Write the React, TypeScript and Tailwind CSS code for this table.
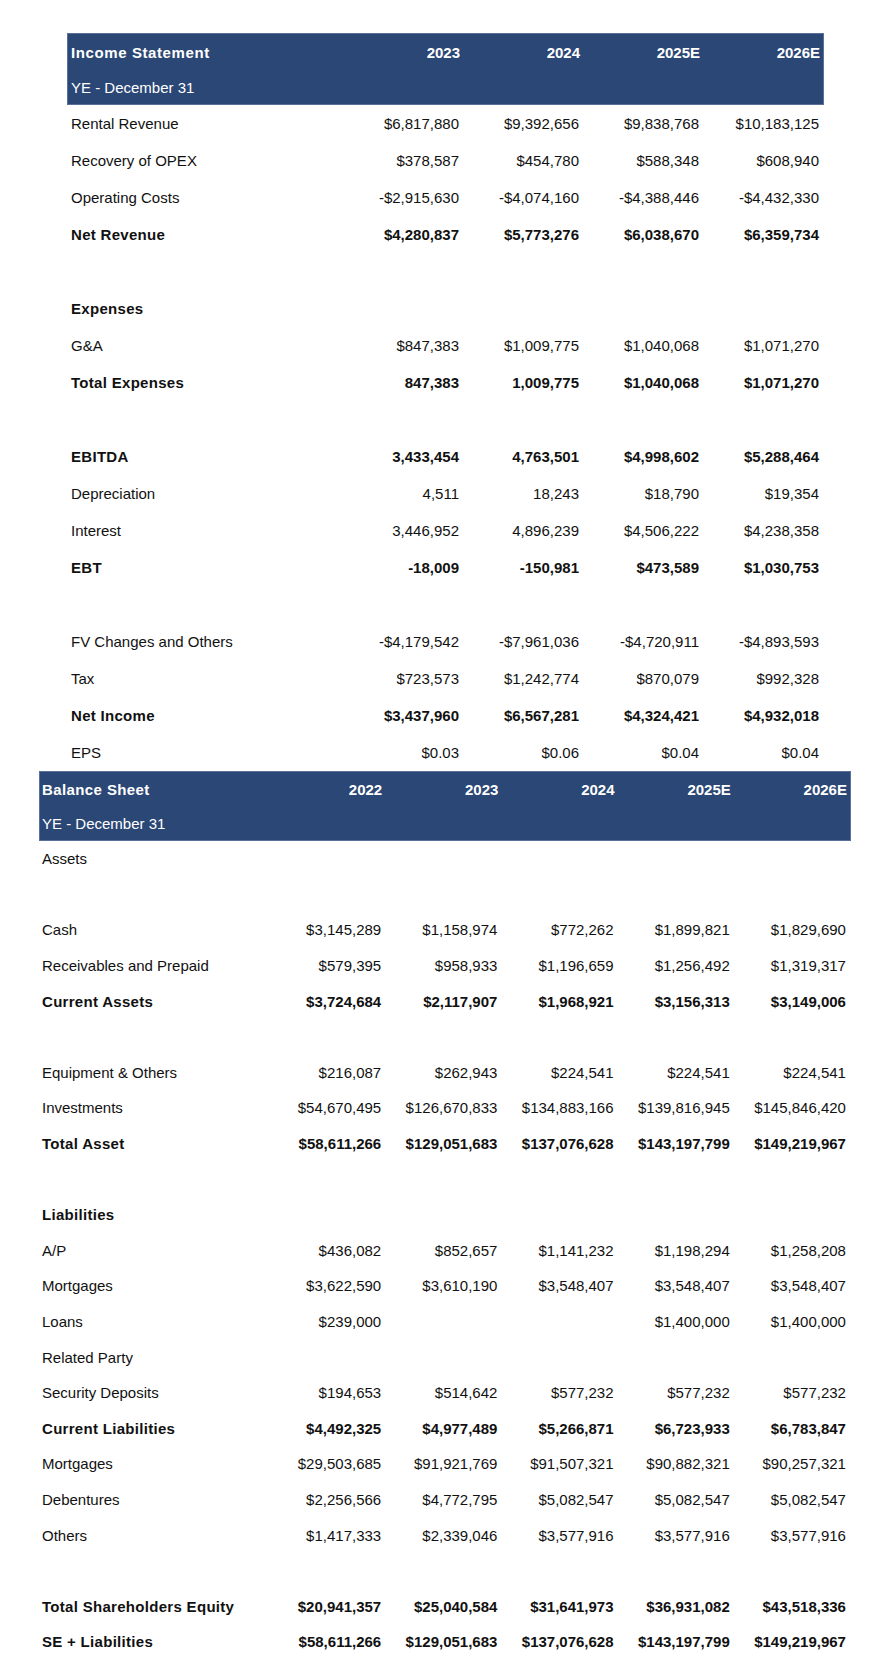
type Row = {
  label?: string;
  values?: string[];
  bold?: boolean;
};

const incomeYears = ["2023", "2024", "2025E", "2026E"];

const incomeRows: Row[] = [
  { label: "Rental Revenue", values: ["$6,817,880", "$9,392,656", "$9,838,768", "$10,183,125"] },
  { label: "Recovery of OPEX", values: ["$378,587", "$454,780", "$588,348", "$608,940"] },
  { label: "Operating Costs", values: ["-$2,915,630", "-$4,074,160", "-$4,388,446", "-$4,432,330"] },
  { label: "Net Revenue", values: ["$4,280,837", "$5,773,276", "$6,038,670", "$6,359,734"], bold: true },
  {},
  { label: "Expenses", bold: true },
  { label: "G&A", values: ["$847,383", "$1,009,775", "$1,040,068", "$1,071,270"] },
  { label: "Total Expenses", values: ["847,383", "1,009,775", "$1,040,068", "$1,071,270"], bold: true },
  {},
  { label: "EBITDA", values: ["3,433,454", "4,763,501", "$4,998,602", "$5,288,464"], bold: true },
  { label: "Depreciation", values: ["4,511", "18,243", "$18,790", "$19,354"] },
  { label: "Interest", values: ["3,446,952", "4,896,239", "$4,506,222", "$4,238,358"] },
  { label: "EBT", values: ["-18,009", "-150,981", "$473,589", "$1,030,753"], bold: true },
  {},
  { label: "FV Changes and Others", values: ["-$4,179,542", "-$7,961,036", "-$4,720,911", "-$4,893,593"] },
  { label: "Tax", values: ["$723,573", "$1,242,774", "$870,079", "$992,328"] },
  { label: "Net Income", values: ["$3,437,960", "$6,567,281", "$4,324,421", "$4,932,018"], bold: true },
  { label: "EPS", values: ["$0.03", "$0.06", "$0.04", "$0.04"] }
];

const balanceYears = ["2022", "2023", "2024", "2025E", "2026E"];

const balanceRows: Row[] = [
  { label: "Assets" },
  {},
  { label: "Cash", values: ["$3,145,289", "$1,158,974", "$772,262", "$1,899,821", "$1,829,690"] },
  { label: "Receivables and Prepaid", values: ["$579,395", "$958,933", "$1,196,659", "$1,256,492", "$1,319,317"] },
  { label: "Current Assets", values: ["$3,724,684", "$2,117,907", "$1,968,921", "$3,156,313", "$3,149,006"], bold: true },
  {},
  { label: "Equipment & Others", values: ["$216,087", "$262,943", "$224,541", "$224,541", "$224,541"] },
  { label: "Investments", values: ["$54,670,495", "$126,670,833", "$134,883,166", "$139,816,945", "$145,846,420"] },
  { label: "Total Asset", values: ["$58,611,266", "$129,051,683", "$137,076,628", "$143,197,799", "$149,219,967"], bold: true },
  {},
  { label: "Liabilities", bold: true },
  { label: "A/P", values: ["$436,082", "$852,657", "$1,141,232", "$1,198,294", "$1,258,208"] },
  { label: "Mortgages", values: ["$3,622,590", "$3,610,190", "$3,548,407", "$3,548,407", "$3,548,407"] },
  { label: "Loans", values: ["$239,000", "", "", "$1,400,000", "$1,400,000"] },
  { label: "Related Party" },
  { label: "Security Deposits", values: ["$194,653", "$514,642", "$577,232", "$577,232", "$577,232"] },
  { label: "Current Liabilities", values: ["$4,492,325", "$4,977,489", "$5,266,871", "$6,723,933", "$6,783,847"], bold: true },
  { label: "Mortgages", values: ["$29,503,685", "$91,921,769", "$91,507,321", "$90,882,321", "$90,257,321"] },
  { label: "Debentures", values: ["$2,256,566", "$4,772,795", "$5,082,547", "$5,082,547", "$5,082,547"] },
  { label: "Others", values: ["$1,417,333", "$2,339,046", "$3,577,916", "$3,577,916", "$3,577,916"] },
  {},
  { label: "Total Shareholders Equity", values: ["$20,941,357", "$25,040,584", "$31,641,973", "$36,931,082", "$43,518,336"], bold: true },
  { label: "SE + Liabilities", values: ["$58,611,266", "$129,051,683", "$137,076,628", "$143,197,799", "$149,219,967"], bold: true }
];

export default function App() {
  return (
    <main className="min-h-[1676px] w-[896px] bg-white pt-[33px] font-['Liberation_Sans',Arial,sans-serif] text-[15px] leading-none text-[#111]">
      {/* income statement */}
      <section className="ml-[67px] w-[757px]">
        <div className="border border-[#5b7199] bg-[#2b4775] text-white">
          <div className="grid h-[36px] grid-cols-[276px_repeat(4,120px)] items-center font-bold">
            <span className="pl-[3px] tracking-[0.6px]">Income Statement</span>
            {incomeYears.map((year) => (
              <span key={year} className="pr-[4px] text-right">
                {year}
              </span>
            ))}
          </div>
          <div className="flex h-[34px] items-center pl-[3px]">YE - December 31</div>
        </div>
        {incomeRows.map((row, i) => (
          <div
            key={i}
            className={`grid h-[37px] grid-cols-[277px_repeat(4,120px)] items-center ${row.bold ? "font-bold" : ""}`}
          >
            <span className={`pl-[4px] ${row.bold ? "tracking-[0.3px]" : ""}`}>{row.label}</span>
            {(row.values ?? []).map((value, j) => (
              <span key={j} className="pr-[5px] text-right">
                {value}
              </span>
            ))}
          </div>
        ))}
      </section>

      {/* balance sheet */}
      <section className="ml-[39px] w-[812px]">
        <div className="border border-[#5b7199] bg-[#2b4775] text-white">
          <div className="grid h-[35px] grid-cols-[230px_repeat(5,116.2px)] items-center font-bold">
            <span className="pl-[2px] tracking-[0.4px]">Balance Sheet</span>
            {balanceYears.map((year) => (
              <span key={year} className="pr-[4px] text-right">
                {year}
              </span>
            ))}
          </div>
          <div className="flex h-[33px] items-center pl-[2px]">YE - December 31</div>
        </div>
        {balanceRows.map((row, i) => (
          <div
            key={i}
            className={`grid h-[35.6px] grid-cols-[231px_repeat(5,116.2px)] items-center ${row.bold ? "font-bold" : ""}`}
          >
            <span className={`pl-[3px] ${row.bold ? "tracking-[0.3px]" : ""}`}>{row.label}</span>
            {(row.values ?? []).map((value, j) => (
              <span key={j} className="pr-[5px] text-right">
                {value}
              </span>
            ))}
          </div>
        ))}
      </section>
    </main>
  );
}
